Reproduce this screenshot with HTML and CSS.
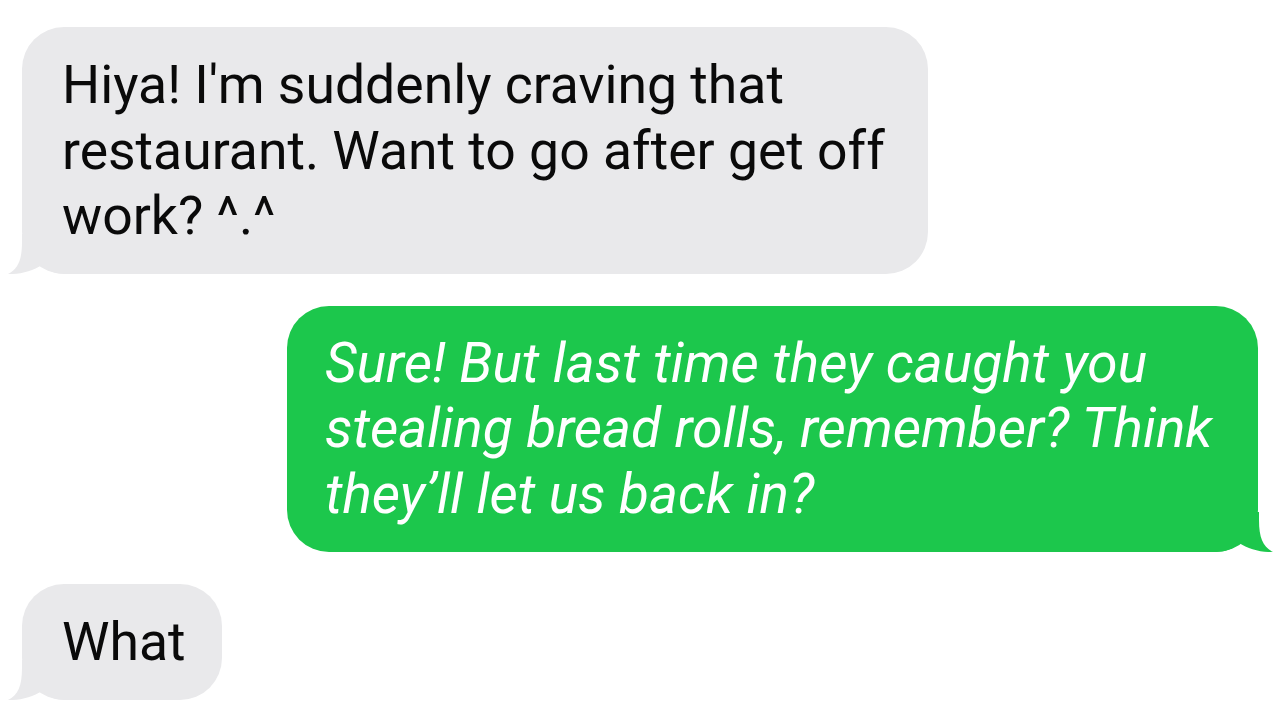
FILE: index.html
```html
<!DOCTYPE html>
<html lang="en">
<head>
    <meta charset="UTF-8">
    <title>Messages</title>
    <link rel="stylesheet" href="styles.css">
</head>
<body>
    <div class="thread">
        <div class="bubble bubble-in bubble-wide">
            Hiya! I'm suddenly craving that<br>
            restaurant. Want to go after get off<br>
            work? ^.^
            <svg class="tail" viewBox="0 0 60 40" width="60" height="40"><path d="M16 8 C16 26 12 35 2 40 C14 40.5 27 37 36 31 C42 37 50 40 60 40 L60 0 L16 0 Z"/></svg>
        </div>

        <div class="bubble bubble-out">
            Sure! But last time they caught you<br>
            stealing bread rolls, remember? Think<br>
            they’ll let us back in?
            <svg class="tail" viewBox="0 0 60 40" width="60" height="40"><path d="M16 8 C16 26 12 35 2 40 C14 40.5 27 37 36 31 C42 37 50 40 60 40 L60 0 L16 0 Z"/></svg>
        </div>

        <div class="bubble bubble-in bubble-short">
            What
            <svg class="tail" viewBox="0 0 60 40" width="60" height="40"><path d="M16 8 C16 26 12 35 2 40 C14 40.5 27 37 36 31 C42 37 50 40 60 40 L60 0 L16 0 Z"/></svg>
        </div>
    </div>
</body>
</html>
```

FILE: styles.css
```css
body {
    margin: 0;
    background: #ffffff;
    font-family: Roboto, 'Liberation Sans', sans-serif;
    overflow: hidden;
}

.thread {
    display: flex;
    flex-direction: column;
    gap: 32px;
    padding: 27px 22px 0 22px;
}

.bubble {
    position: relative;
    box-sizing: border-box;
    padding: 25px 40px;
    border-radius: 42px;
    font-size: 53.5px;
    line-height: 65.5px;
    white-space: nowrap;
}

.bubble-in {
    align-self: flex-start;
    background: #e9e9eb;
    color: #0a0a0a;
    fill: #e9e9eb;
}

.bubble-wide {
    width: 906px;
}

.bubble-short {
    width: 200px;
}

.bubble-out {
    align-self: flex-end;
    width: 971px;
    background: #1cc74c;
    color: #ffffff;
    fill: #1cc74c;
    font-size: 55px;
    font-style: italic;
    padding-left: 38px;
}

.tail {
    position: absolute;
    bottom: 0;
    left: -16px;
}

.bubble-out .tail {
    left: auto;
    right: -17px;
    transform: scaleX(-1);
}
```
